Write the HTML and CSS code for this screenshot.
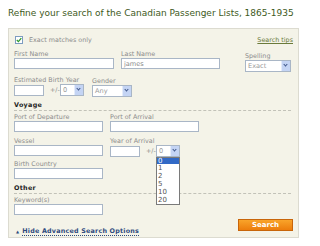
FILE: index.html
```html
<!DOCTYPE html>
<html lang="en">
<head>
    <meta charset="UTF-8">
    <title>Refine your search</title>
    <link rel="stylesheet" href="styles.css">
</head>
<body>
    <h1 class="title">Refine your search of the Canadian Passenger Lists, 1865-1935</h1>

    <div class="panel">
        <div class="top-row">
            <label class="exact">
                <span class="checkbox">
                    <svg width="6" height="6" viewBox="0 0 6 6"><polyline points="0.8,3 2.4,4.6 5.3,1.2" fill="none" stroke="#2e9a2e" stroke-width="1.3"/></svg>
                </span>
                Exact matches only
            </label>
            <a class="tips" href="#">Search tips</a>
        </div>

        <div class="row">
            <div class="field">
                <span class="label">First Name</span>
                <span class="input w-name"></span>
            </div>
            <div class="field">
                <span class="label">Last Name</span>
                <span class="input w-last">james</span>
            </div>
            <div class="field spelling">
                <span class="label">Spelling</span>
                <span class="select w-spell">Exact<span class="arrow"></span></span>
            </div>
        </div>

        <div class="row">
            <div class="field">
                <span class="label">Estimated Birth Year</span>
                <div class="inline">
                    <span class="input w-year"></span>
                    <span class="pm">+/-</span>
                    <span class="select w-range">0<span class="arrow"></span></span>
                </div>
            </div>
            <div class="field gender">
                <span class="label">Gender</span>
                <span class="select w-gender">Any<span class="arrow"></span></span>
            </div>
        </div>

        <div class="section">Voyage</div>

        <div class="row row-port">
            <div class="field">
                <span class="label">Port of Departure</span>
                <span class="input w-port"></span>
            </div>
            <div class="field">
                <span class="label">Port of Arrival</span>
                <span class="input w-port"></span>
            </div>
        </div>

        <div class="row row-vessel">
            <div class="field">
                <span class="label">Vessel</span>
                <span class="input w-port"></span>
            </div>
            <div class="field">
                <span class="label">Year of Arrival</span>
                <div class="inline">
                    <span class="input w-year"></span>
                    <span class="pm">+/-</span>
                    <div class="dropdown">
                        <span class="select w-range">0<span class="arrow"></span></span>
                        <ul class="options">
                            <li class="selected">0</li>
                            <li>1</li>
                            <li>2</li>
                            <li>5</li>
                            <li>10</li>
                            <li>20</li>
                        </ul>
                    </div>
                </div>
            </div>
        </div>

        <div class="row row-country">
            <div class="field">
                <span class="label">Birth Country</span>
                <span class="input w-port"></span>
            </div>
        </div>

        <div class="section section-other">Other</div>

        <div class="row row-port">
            <div class="field">
                <span class="label">Keyword(s)</span>
                <span class="input w-port"></span>
            </div>
        </div>

        <div class="bottom-row">
            <a class="hide-link" href="#"><span class="tri">&#9650;</span><span class="hide-text">Hide Advanced Search Options</span></a>
            <button class="search-button">Search</button>
        </div>
    </div>
</body>
</html>
```

FILE: styles.css
```css
:root {
    --panel-bg: #f4f3e8;
    --panel-border: #dcdbd0;
    --label: #8c8c8c;
    --input-border: #a9b6c6;
    --title: #3e5a1c;
    --link: #2f4a7e;
}

body {
    margin: 0;
    background-color: #ffffff;
    font-family: "DejaVu Sans", Verdana, sans-serif;
    font-size: 6.4px;
    color: var(--label);
}

.title {
    margin: 0;
    padding: 7px 0 0 8px;
    height: 13px;
    font-size: 9px;
    font-weight: normal;
    color: var(--title);
    line-height: 12px;
    white-space: nowrap;
}

.panel {
    box-sizing: border-box;
    margin: 8px 0 0 8px;
    width: 291px;
    height: 210px;
    padding: 5px 4px 4px 5px;
    background-color: var(--panel-bg);
    border: 1px solid var(--panel-border);
}

.top-row {
    display: flex;
    justify-content: space-between;
    align-items: center;
    height: 12px;
}

.exact {
    display: flex;
    align-items: center;
    margin-left: 1px;
}

.checkbox {
    display: flex;
    align-items: center;
    justify-content: center;
    width: 6px;
    height: 6px;
    margin-right: 6px;
    background-color: #ffffff;
    border: 1px solid #7d9cc0;
}

.tips {
    color: #6a7a3a;
    text-decoration: underline;
    margin-right: 1px;
}

.row {
    display: flex;
    gap: 7px;
    margin-top: 5px;
}

.row-port { margin-top: 3px; }
.row-vessel { margin-top: 6px; }
.row-country { margin-top: 4px; }

.field {
    display: flex;
    flex-direction: column;
}

.label {
    height: 6px;
    line-height: 6px;
    margin-bottom: 1px;
    white-space: nowrap;
}

.spelling {
    margin-left: 18px;
    padding-top: 2px;
}

.gender {
    margin-left: 1px;
    padding-top: 1px;
}

.inline {
    display: flex;
    align-items: center;
}

.pm {
    margin: 0 1px 0 6px;
    width: 8px;
}

.input, .select {
    display: flex;
    align-items: center;
    box-sizing: border-box;
    height: 11px;
    padding-left: 2px;
    background-color: #ffffff;
    border: 1px solid var(--input-border);
    color: #8a8a8a;
    font-size: 6.6px;
}

.select {
    position: relative;
    height: 12px;
    color: #999999;
}

.arrow {
    position: absolute;
    right: 0;
    top: 0;
    width: 8px;
    height: 10px;
    background-color: #c4d4f4;
    border-left: 1px solid #e4ecfb;
}

.arrow::after {
    content: "";
    position: absolute;
    left: 2px;
    top: 2px;
    width: 2px;
    height: 2px;
    border-right: 1px solid #40588a;
    border-bottom: 1px solid #40588a;
    transform: rotate(45deg);
}

.w-name { width: 100px; }
.w-last { width: 99px; }
.w-spell { width: 46px; }
.w-year { width: 30px; }
.w-range { width: 24px; margin-left: 1px; }
.w-gender { width: 40px; }
.w-port { width: 89px; }

.section {
    margin-top: 5px;
    margin-right: 3px;
    padding-bottom: 1px;
    height: 7px;
    line-height: 7px;
    border-bottom: 1px dashed #c2c2b8;
    color: #222222;
    font-weight: bold;
    letter-spacing: 0.3px;
}

.section-other { margin-top: 6px; }

.dropdown {
    position: relative;
}

.options {
    position: absolute;
    left: 1px;
    top: 12px;
    z-index: 2;
    margin: 0;
    padding: 0;
    list-style: none;
    box-sizing: border-box;
    width: 24px;
    background-color: #ffffff;
    border: 1px solid #7a7a7a;
    color: #555555;
    font-size: 7px;
}

.options li {
    height: 8px;
    line-height: 8px;
    padding-left: 1px;
}

.options li.selected {
    height: 6px;
    line-height: 6px;
    background-color: #3169c6;
    color: #ffffff;
}

.bottom-row {
    display: flex;
    justify-content: space-between;
    align-items: flex-start;
    margin-top: 4px;
}

.hide-link {
    display: flex;
    align-items: center;
    margin-left: 2px;
    margin-top: 8px;
    color: var(--link);
    text-decoration: none;
    font-weight: bold;
    letter-spacing: 0.2px;
}

.tri {
    font-size: 4px;
    margin-right: 3px;
}

.hide-text {
    border-bottom: 1px dotted var(--link);
}

.search-button {
    width: 55px;
    height: 12px;
    margin-right: 1px;
    padding: 0;
    border: 1px solid #c8650a;
    background: linear-gradient(#f9a42a, #ec7d0c);
    color: #ffffff;
    font-family: "DejaVu Sans", Verdana, sans-serif;
    font-size: 7px;
    font-weight: bold;
    line-height: 10px;
}
```
